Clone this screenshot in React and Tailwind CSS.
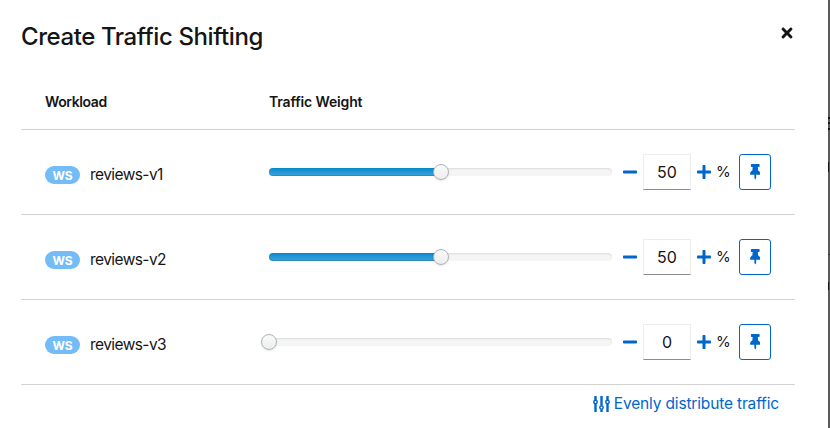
import { FaTimes, FaMinus, FaPlus, FaThumbtack } from "react-icons/fa";

const workloads = [
  { name: "reviews-v1", weight: 50 },
  { name: "reviews-v2", weight: 50 },
  { name: "reviews-v3", weight: 0 },
];

function EqualizerIcon() {
  return (
    <svg width="17" height="16" viewBox="0 0 17 16" fill="none" stroke="#0066cc" strokeWidth="2.4">
      <path d="M2.5 0V4M2.5 8V16M8.5 0V9M8.5 13.5V16M14.5 0V4M14.5 8V16" />
      <circle cx="2.5" cy="6" r="1.7" strokeWidth="1.5" />
      <circle cx="8.5" cy="11.5" r="1.7" strokeWidth="1.5" />
      <circle cx="14.5" cy="6" r="1.7" strokeWidth="1.5" />
    </svg>
  );
}

function Slider({ value }) {
  return (
    <div className="relative h-2 w-[343px] rounded-full bg-[#f5f5f5] shadow-[inset_0_1px_2px_rgba(0,0,0,0.1)]">
      <div
        className="h-2 rounded-l-full bg-gradient-to-b from-[#0088ce] to-[#39a5dc] shadow-[inset_0_-1px_0_rgba(0,0,0,0.15)]"
        style={{ width: `${value}%` }}
      />
      <div
        className="absolute -top-1 -ml-2 size-4 rounded-full border border-[#a9b4bb] bg-gradient-to-b from-[#fafafa] to-[#ededed] shadow-[0_1px_2px_rgba(0,0,0,0.1)]"
        style={{ left: `${value}%` }}
      />
    </div>
  );
}

function Row({ name, weight }) {
  return (
    <div className="flex h-[85px] items-center border-b border-[#d2d2d2] pl-6">
      <div className="flex w-[224px] items-center pt-[6px]">
        <span className="flex h-[18px] w-[35px] items-center justify-center rounded-full bg-[#73bcf7] pt-px text-[12px] font-bold tracking-[-0.2px] text-white">
          WS
        </span>
        <span className="ml-[10px] text-[15.5px] tracking-[-0.58px]">{name}</span>
      </div>
      <Slider value={weight} />
      <FaMinus className="ml-[10px] size-4 text-[#0066cc]" />
      <div className="ml-[5px] flex h-9 w-12 items-center justify-center border border-[#ededed] border-b-[#8a8d90] text-[16px]">
        {weight}
      </div>
      <FaPlus className="ml-[5px] size-4 text-[#0066cc]" />
      <span className="ml-[4px] w-[13px] text-[15px] tracking-[-0.5px]">%</span>
      <button className="ml-[10px] flex h-9 w-8 items-center justify-center rounded-[3px] border border-[#0066cc] text-[#0066cc]">
        <FaThumbtack className="h-[15.5px] w-[10.5px]" preserveAspectRatio="none" />
      </button>
    </div>
  );
}

export default function App() {
  return (
    <div className="flex h-[428px] w-[830px] overflow-hidden bg-white font-['Inter',sans-serif] text-[#151515]">
      <main className="flex w-[828px] shrink-0 flex-col pl-[21px] pr-[33px]">
        <header className="flex h-[74px] items-start justify-between">
          <h1 className="pt-[19px] text-[24px] font-medium leading-9 tracking-[-0.41px]">Create Traffic Shifting</h1>
          <FaTimes className="mt-[25px] size-4" />
        </header>
        <div className="flex h-14 items-center border-b border-[#d2d2d2] pl-6 text-[14px] font-semibold">
          <span className="w-[224px] tracking-[-0.4px]">Workload</span>
          <span className="tracking-[-0.15px]">Traffic Weight</span>
        </div>
        {workloads.map((w) => (
          <Row key={w.name} {...w} />
        ))}
        <div className="flex h-[38px] items-center justify-end pr-4 text-[#0066cc]">
          <EqualizerIcon />
          <span className="ml-[4px] text-[15.5px] tracking-[-0.16px]">Evenly distribute traffic</span>
        </div>
      </main>
      <aside className="flex w-0.5 shrink-0 flex-col bg-[#5b5b5d]">
        <span className="mt-[117px] h-0.5 bg-[#151515]" />
        <span className="mt-[3px] h-0.5 bg-[#151515]" />
        <span className="mt-[4px] h-0.5 bg-[#151515]" />
        <span className="mt-[32px] h-[10px] w-px bg-[#151515]" />
        <span className="mt-[82px] h-px bg-[#333]" />
        <span className="mt-[27px] h-2 w-px bg-[#151515]" />
      </aside>
    </div>
  );
}
